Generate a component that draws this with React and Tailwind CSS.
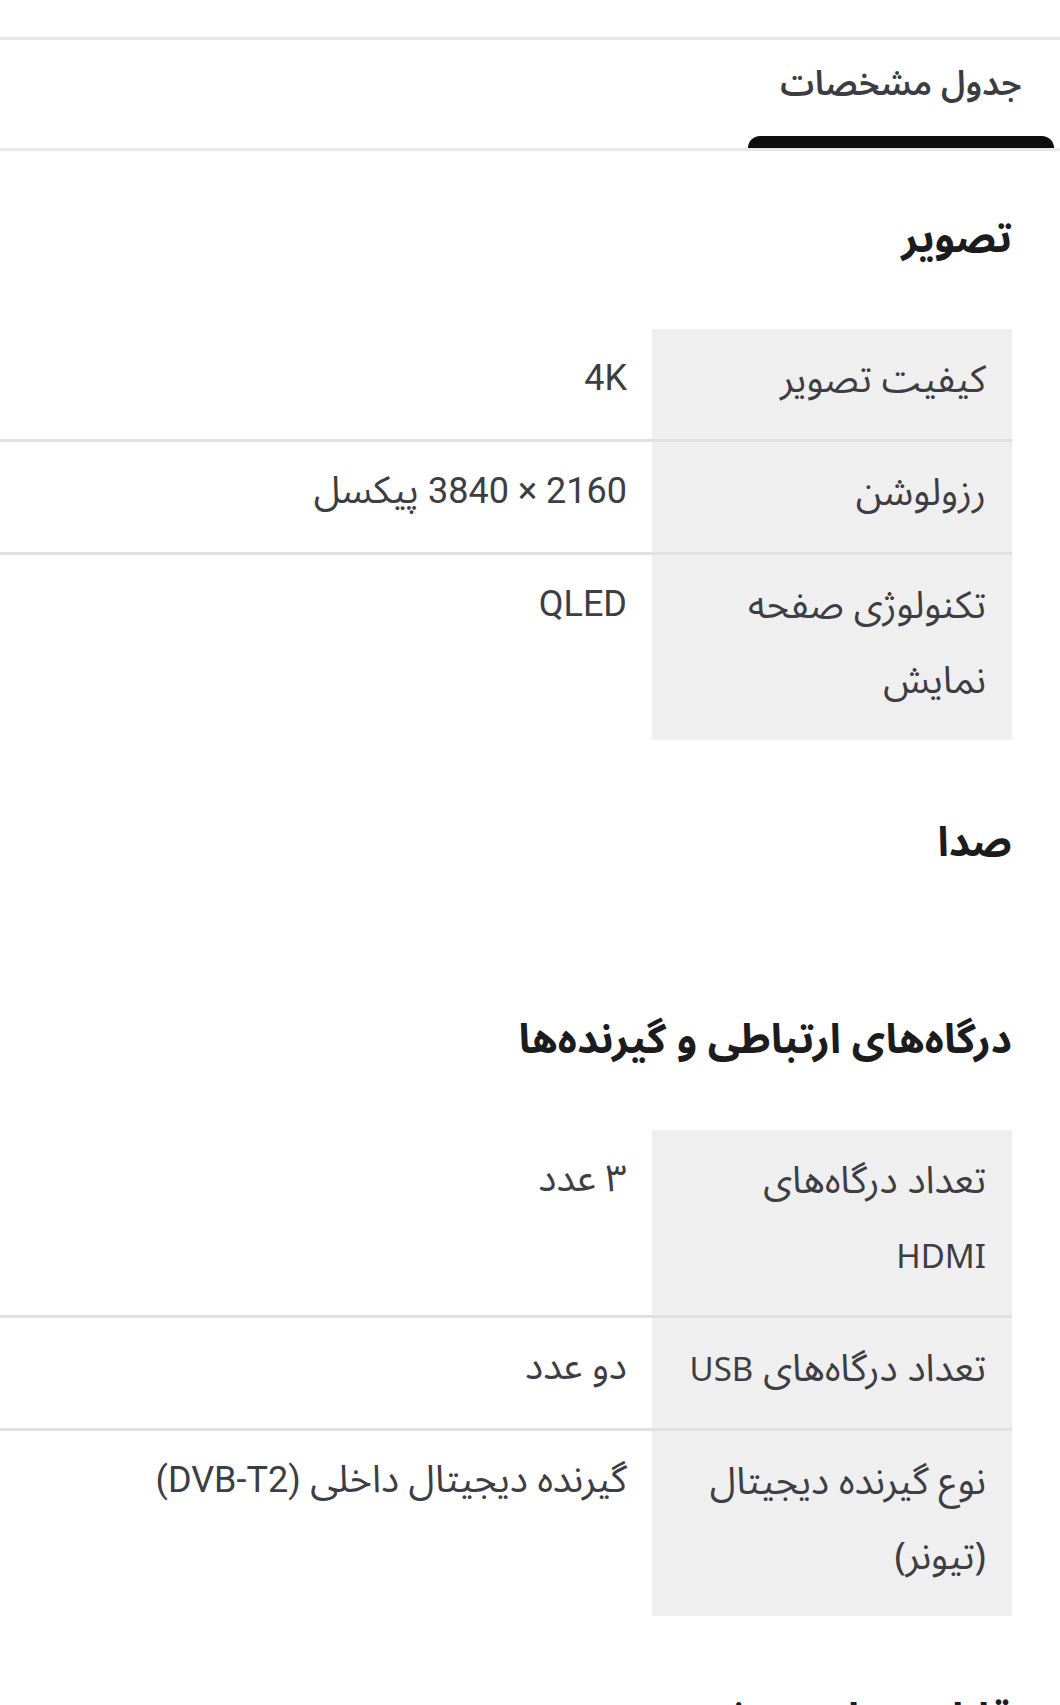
function LL({ children }) {
  return <span className="text-[33px] leading-none">{children}</span>;
}
function VL({ children }) {
  return <span className="text-[36px] leading-none">{children}</span>;
}

function Row({ label, value, first }) {
  return (
    <div className={"flex " + (first ? "" : "border-t-[3px] border-[#e1e1e3]")}>
      <div className="w-[360px] shrink-0 bg-[#efeff0] pr-[26px] pl-[12px] pt-[11px] pb-[24px] text-[38px] leading-[75px] text-[#3d3e44] font-['Noto_Sans','Noto_Sans_Arabic','Vazirmatn','DejaVu_Sans',sans-serif] whitespace-nowrap">
        {label}
      </div>
      <div className="flex-1 pr-[25px] pl-4 pt-[11px] pb-[24px] text-[38px] leading-[75px] text-[#3d3e44] font-['Roboto','Noto_Sans_Arabic','Vazirmatn','DejaVu_Sans',sans-serif] whitespace-nowrap">
        {value}
      </div>
    </div>
  );
}

function Section({ title, rows }) {
  return (
    <div className="pt-[61px] pb-[15px]">
      <h2 className="text-[41px] leading-[48px] font-bold text-[#1c1c1e] mb-[69px] font-['Noto_Sans','Noto_Sans_Arabic','Vazirmatn','DejaVu_Sans',sans-serif]">
        {title}
      </h2>
      {rows.length > 0 ? (
        <div className="flex flex-col">
          {rows.map((r, i) => (
            <Row key={i} label={r.label} value={r.value} first={i === 0} />
          ))}
        </div>
      ) : (
        <div className="h-[4px]" />
      )}
    </div>
  );
}

export default function App() {
  const sections = [
    {
      title: "تصویر",
      rows: [
        { label: "کیفیت تصویر", value: <VL>4K</VL> },
        { label: "رزولوشن", value: <><VL>2160 × 3840</VL> پیکسل</> },
        { label: <>تکنولوژی صفحه<br />نمایش</>, value: <VL>QLED</VL> },
      ],
    },
    { title: "صدا", rows: [] },
    {
      title: "درگاه\u200cهای ارتباطی و گیرنده\u200cها",
      rows: [
        { label: <>تعداد درگاه{"\u200c"}های<br /><LL>HDMI</LL></>, value: "۳ عدد" },
        { label: <>تعداد درگاه{"\u200c"}های <LL>USB</LL></>, value: "دو عدد" },
        { label: <>نوع گیرنده دیجیتال<br />(تیونر)</>, value: <>گیرنده دیجیتال داخلی <VL>(DVB-T2)</VL></> },
      ],
    },
    { title: "قابلیت\u200cهای هوشمند", rows: [] },
  ];

  return (
    <div dir="rtl" className="w-[1060px] h-[1705px] overflow-hidden bg-white">
      <div className="h-[37px]" />
      <div className="border-t-[3px] border-b-[3px] border-[#e8e8e8] h-[114px] flex items-end pr-[6px]">
        <div className="relative w-[306px] h-full flex flex-col items-center">
          <div className="flex-1 flex items-center pb-[12px] text-[34px] font-semibold text-[#3c3d43] font-['Noto_Sans','Noto_Sans_Arabic','Vazirmatn','DejaVu_Sans',sans-serif]">
            جدول مشخصات
          </div>
          <div className="w-full h-[12px] bg-[#0e0e0e] rounded-t-[12px]" />
        </div>
      </div>
      <div className="mr-[48px]">
        {sections.map((s, i) => (
          <Section key={i} title={s.title} rows={s.rows} />
        ))}
      </div>
    </div>
  );
}
